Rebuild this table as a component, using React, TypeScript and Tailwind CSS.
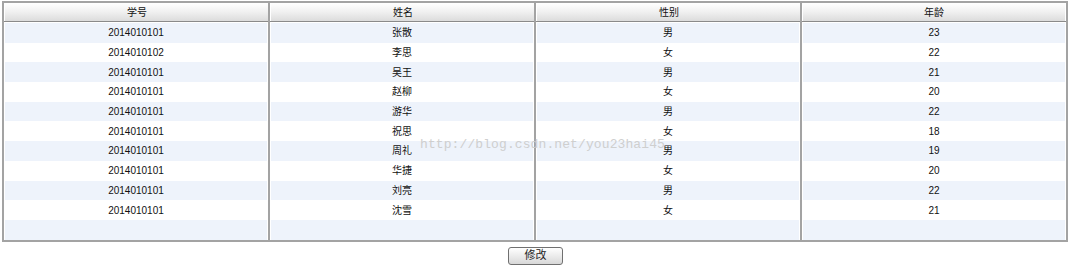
const rows = [
  { no: "2014010101", name: "张散", sex: "男", age: 23 },
  { no: "2014010102", name: "李思", sex: "女", age: 22 },
  { no: "2014010101", name: "吴王", sex: "男", age: 21 },
  { no: "2014010101", name: "赵柳", sex: "女", age: 20 },
  { no: "2014010101", name: "游华", sex: "男", age: 22 },
  { no: "2014010101", name: "祝思", sex: "女", age: 18 },
  { no: "2014010101", name: "周礼", sex: "男", age: 19 },
  { no: "2014010101", name: "华捷", sex: "女", age: 20 },
  { no: "2014010101", name: "刘亮", sex: "男", age: 22 },
  { no: "2014010101", name: "沈雪", sex: "女", age: 21 },
];

const headers = ["学号", "姓名", "性别", "年龄"];

function Row({ cells, striped }: { cells: (string | number)[]; striped: boolean }) {
  return (
    <div className="grid h-[19.7px] grid-cols-[266px_266px_266px_1fr]">
      {cells.map((c, i) => (
        <div
          key={i}
          className={`flex items-center justify-center border-x border-white ${striped ? "bg-[#eef3fb]" : "bg-white"} ${i < 3 ? "mr-[2px]" : ""}`}
        >
          {c}
        </div>
      ))}
    </div>
  );
}

export default function App() {
  return (
    <div
      className="relative h-[268px] w-[1071px] bg-white text-[10px] text-[#111]"
      style={{ fontFamily: '"Liberation Sans", "Noto Sans CJK SC", sans-serif' }}
    >
      <div className="ml-[2px] mt-[1px] w-[1066px] border-2 border-[#a3a3a3]">
        <div className="relative">
          <div className="grid h-[19px] grid-cols-[266px_266px_266px_1fr] border-b border-[#8a8a8a] bg-gradient-to-b from-white via-[#f0f0f0] to-[#dcdcdc]">
            {headers.map((h) => (
              <div key={h} className="flex items-center justify-center border-x border-white">
                {h}
              </div>
            ))}
          </div>
          <div className="h-px bg-white" />
          {rows.map((r, i) => (
            <Row key={i} cells={[r.no, r.name, r.sex, r.age]} striped={i % 2 === 0} />
          ))}
          <Row cells={["", "", "", ""]} striped />
          <div className="pointer-events-none absolute inset-0 grid grid-cols-[266px_266px_266px_1fr]">
            <div className="border-r-2 border-[#a3a3a3]" />
            <div className="border-r-2 border-[#a3a3a3]" />
            <div className="border-r-2 border-[#a3a3a3]" />
            <div />
          </div>
        </div>
      </div>

      <div className="mt-[5px] flex justify-center">
        <button className="h-[18px] w-[55px] rounded-[3px] border border-[#707070] bg-gradient-to-b from-white to-[#d8d8d8] text-[11px] leading-none text-[#222]">
          修改
        </button>
      </div>

      <div
        className="pointer-events-none absolute left-[420px] top-[134px] text-[13px] tracking-[0.1px] text-[#cfcfcf]"
        style={{ fontFamily: '"Liberation Mono", monospace' }}
      >
        http://blog.csdn.net/you23hai45
      </div>
    </div>
  );
}
